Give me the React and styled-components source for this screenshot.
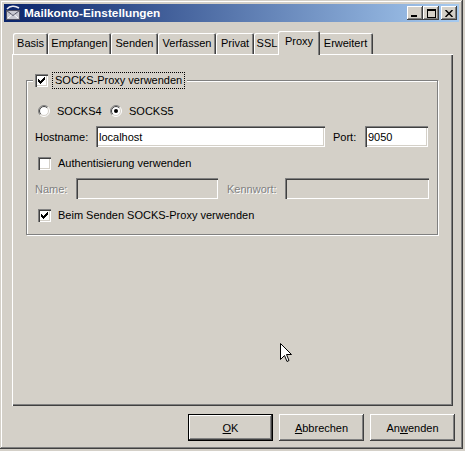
import React from 'react';
import styled, { createGlobalStyle } from 'styled-components';

const GlobalStyle = createGlobalStyle`
  html, body {
    margin: 0;
    padding: 0;
    background: #d4d0c8;
  }
  body {
    font-family: "Liberation Sans", Arial, sans-serif;
    font-size: 11px;
    color: #000;
  }
`;

const Window = styled.div`
  position: relative;
  width: 463px;
  height: 449px;
  box-sizing: border-box;
  padding: 4px;
  background: #d4d0c8;
  box-shadow: inset -1px -1px #404040, inset 1px 1px #d4d0c8,
    inset -2px -2px #808080, inset 2px 2px #fff;
  display: flex;
  flex-direction: column;
`;

const TitleBar = styled.div`
  height: 18px;
  display: flex;
  align-items: center;
  padding: 0 2px 0 1px;
  background: linear-gradient(to right, #0a246a, #a6caf0);
`;

const TitleText = styled.div`
  flex: 1;
  margin-left: 3px;
  color: #fff;
  font-weight: bold;
  font-size: 11.8px;
  white-space: nowrap;
`;

const Controls = styled.div`
  display: flex;
  > :last-child {
    margin-left: 2px;
  }
`;

const CtlButton = styled.div`
  width: 16px;
  height: 14px;
  box-sizing: border-box;
  background: #d4d0c8;
  box-shadow: inset -1px -1px #404040, inset 1px 1px #fff,
    inset -2px -2px #808080;
  display: flex;
  align-items: center;
  justify-content: center;
  svg {
    display: block;
  }
`;

const Body = styled.div`
  flex: 1;
  display: flex;
  flex-direction: column;
  padding: 9px 4px 0 8px;
`;

const TabStrip = styled.div`
  display: flex;
  align-items: flex-end;
  height: 23px;
  padding-left: 1px;
`;

const Tab = styled.div`
  position: relative;
  box-sizing: border-box;
  flex: none;
  width: ${p => (p.$active ? p.$w + 4 : p.$w)}px;
  height: ${p => (p.$active ? 24 : 21)}px;
  margin: ${p => (p.$active ? '0 -2px -1px' : '0')};
  z-index: ${p => (p.$active ? 1 : 0)};
  padding-top: 4px;
  text-align: center;
  white-space: nowrap;
  background: #d4d0c8;
  border-radius: 2px 2px 0 0;
  box-shadow: inset 1px 1px #fff, inset -1px 0 #404040, inset -2px 0 #808080;
`;

const Panel = styled.div`
  width: 441px;
  height: 352px;
  box-sizing: border-box;
  padding: 26px 15px 0 14px;
  box-shadow: inset 1px 1px #fff, inset -1px -1px #404040,
    inset -2px -2px #808080;
`;

const GroupBox = styled.div`
  position: relative;
  height: 155px;
  box-sizing: border-box;
  border: 1px solid #808080;
  box-shadow: inset 1px 1px #fff, 1px 1px #fff;
  padding: 20px 9px 0 8px;
  display: flex;
  flex-direction: column;
`;

const Legend = styled.div`
  position: absolute;
  top: -11px;
  left: 6px;
  height: 20px;
  padding: 0 2px;
  display: flex;
  align-items: center;
  background: #d4d0c8;
`;

const FocusLabel = styled.span`
  margin-left: 4px;
  padding: 1px 2px 2px;
  border: 1px dotted #000;
  white-space: nowrap;
`;

const Row = styled.div`
  display: flex;
  align-items: center;
  height: ${p => p.$h || 20}px;
  margin-top: ${p => p.$mt || 0}px;
  padding-left: ${p => p.$indent || 0}px;
`;

const Choice = styled.div`
  display: flex;
  align-items: center;
  width: ${p => (p.$w ? `${p.$w}px` : 'auto')};
  white-space: nowrap;
  span {
    margin-left: 7px;
  }
`;

const Label = styled.div`
  flex: none;
  width: ${p => p.$w}px;
  margin-left: ${p => p.$ml || 0}px;
  white-space: nowrap;
  color: ${p => (p.$disabled ? '#808080' : '#000')};
  text-shadow: ${p => (p.$disabled ? '1px 1px #fff' : 'none')};
`;

const TextField = styled.input`
  flex: none;
  width: ${p => p.$w}px;
  height: 21px;
  box-sizing: border-box;
  margin: 0;
  border: none;
  outline: none;
  padding: 0 0 0 3px;
  font-family: "Liberation Sans", Arial, sans-serif;
  font-size: 11px;
  color: #000;
  background: ${p => (p.disabled ? '#d4d0c8' : '#fff')};
  box-shadow: inset 1px 1px #808080, inset 2px 2px #404040,
    inset -1px -1px #fff, inset -2px -2px #d4d0c8;
`;

const CheckBox = styled.div`
  flex: none;
  width: 13px;
  height: 13px;
  box-sizing: border-box;
  background: #fff;
  box-shadow: inset 1px 1px #808080, inset 2px 2px #404040,
    inset -1px -1px #fff, inset -2px -2px #d4d0c8;
  svg {
    display: block;
  }
`;

const ButtonRow = styled.div`
  display: flex;
  justify-content: flex-end;
  gap: 6px;
  margin-top: 8px;
`;

const Button = styled.div`
  width: 85px;
  height: 27px;
  box-sizing: border-box;
  display: flex;
  align-items: center;
  justify-content: center;
  background: #d4d0c8;
  border: ${p => (p.$default ? '1px solid #000' : 'none')};
  box-shadow: inset -1px -1px #404040, inset 1px 1px #fff,
    inset -2px -2px #808080;
`;

const Cursor = styled.svg`
  position: absolute;
  left: 280px;
  top: 343px;
`;

const checkTops = [2, 3, 4, 3, 2, 1, 0];

const CheckMark = () => (
  <svg width="13" height="13" viewBox="0 0 13 13" shapeRendering="crispEdges">
    {checkTops.map((t, i) => (
      <rect key={i} x={3 + i} y={3 + t} width="1" height="3" fill="#000" />
    ))}
  </svg>
);

const Check = ({ checked }) => <CheckBox>{checked && <CheckMark />}</CheckBox>;

const Radio = ({ checked }) => {
  const d = r => {
    const k = r / Math.SQRT2;
    return { x1: 6 - k, y1: 6 + k, x2: 6 + k, y2: 6 - k };
  };
  const o = d(5.5);
  const i = d(4.5);
  return (
    <svg width="12" height="12" viewBox="0 0 12 12" style={{ flex: 'none' }}>
      <circle cx="6" cy="6" r="5" fill="#fff" />
      <path d={`M${o.x1} ${o.y1} A5.5 5.5 0 0 1 ${o.x2} ${o.y2}`} stroke="#808080" fill="none" />
      <path d={`M${o.x2} ${o.y2} A5.5 5.5 0 0 1 ${o.x1} ${o.y1}`} stroke="#fff" fill="none" />
      <path d={`M${i.x1} ${i.y1} A4.5 4.5 0 0 1 ${i.x2} ${i.y2}`} stroke="#404040" fill="none" />
      <path d={`M${i.x2} ${i.y2} A4.5 4.5 0 0 1 ${i.x1} ${i.y1}`} stroke="#d4d0c8" fill="none" />
      {checked && <circle cx="6" cy="6" r="2" fill="#000" />}
    </svg>
  );
};

const MailIcon = () => (
  <svg width="16" height="16" viewBox="0 0 16 16">
    <rect x="1.5" y="5.5" width="13" height="9" fill="#c8c8d0" stroke="#505060" />
    <path d="M1.5 5.5 L8 10.5 L14.5 5.5" fill="none" stroke="#505060" />
    <path d="M2 4 C5 0.5 10 0.5 14 3" fill="none" stroke="#e8e8f0" strokeWidth="1.5" />
    <path d="M3 13 L6.5 10 M13 13 L9.5 10" stroke="#fff" />
  </svg>
);

const tabs = [
  ['Basis', 35],
  ['Empfangen', 63],
  ['Senden', 47],
  ['Verfassen', 58],
  ['Privat', 38],
  ['SSL', 26],
  ['Proxy', 38],
  ['Erweitert', 55],
];

export default function App() {
  return (
    <>
      <GlobalStyle />
      <Window>
        <TitleBar>
          <MailIcon />
          <TitleText>Mailkonto-Einstellungen</TitleText>
          <Controls>
            <CtlButton>
              <svg width="8" height="7" viewBox="0 0 8 7" shapeRendering="crispEdges">
                <rect x="0" y="5" width="6" height="2" fill="#000" />
              </svg>
            </CtlButton>
            <CtlButton>
              <svg width="9" height="9" viewBox="0 0 9 9" shapeRendering="crispEdges">
                <rect x="0.5" y="0.5" width="8" height="8" fill="none" stroke="#000" />
                <rect x="0" y="1" width="9" height="1" fill="#000" />
              </svg>
            </CtlButton>
            <CtlButton>
              <svg width="8" height="7" viewBox="0 0 8 7">
                <path d="M0.5 0 L7.5 7 M7.5 0 L0.5 7" stroke="#000" strokeWidth="1.5" />
              </svg>
            </CtlButton>
          </Controls>
        </TitleBar>

        <Body>
          <TabStrip>
            {tabs.map(([name, w]) => (
              <Tab key={name} $w={w} $active={name === 'Proxy'}>
                {name}
              </Tab>
            ))}
          </TabStrip>

          <Panel>
            <GroupBox>
              <Legend>
                <Check checked />
                <FocusLabel>SOCKS-Proxy verwenden</FocusLabel>
              </Legend>

              <Row $indent={3}>
                <Choice $w={72}>
                  <Radio />
                  <span>SOCKS4</span>
                </Choice>
                <Choice>
                  <Radio checked />
                  <span>SOCKS5</span>
                </Choice>
              </Row>

              <Row $h={21} $mt={5}>
                <Label $w={61}>Hostname:</Label>
                <TextField $w={229} defaultValue="localhost" readOnly />
                <Label $w={32} $ml={8}>Port:</Label>
                <TextField $w={63} defaultValue="9050" readOnly />
              </Row>

              <Row $mt={6} $indent={3}>
                <Choice>
                  <Check />
                  <span>Authentisierung verwenden</span>
                </Choice>
              </Row>

              <Row $h={21} $mt={5}>
                <Label $w={41} $disabled>Name:</Label>
                <TextField $w={142} disabled />
                <Label $w={58} $ml={9} $disabled>Kennwort:</Label>
                <TextField $w={144} disabled />
              </Row>

              <Row $mt={6} $indent={3}>
                <Choice>
                  <Check checked />
                  <span>Beim Senden SOCKS-Proxy verwenden</span>
                </Choice>
              </Row>
            </GroupBox>
          </Panel>

          <ButtonRow>
            <Button $default>
              <span><u>O</u>K</span>
            </Button>
            <Button>
              <span><u>A</u>bbrechen</span>
            </Button>
            <Button>
              <span>An<u>w</u>enden</span>
            </Button>
          </ButtonRow>
        </Body>

        <Cursor width="12" height="20" viewBox="0 0 12 20">
          <path
            d="M0.5 0.5 L0.5 16.5 L4.5 12.5 L7 18.5 L9 17.5 L6.5 11.5 L11.5 11.5 Z"
            fill="#fff"
            stroke="#000"
            strokeLinejoin="miter"
          />
        </Cursor>
      </Window>
    </>
  );
}
